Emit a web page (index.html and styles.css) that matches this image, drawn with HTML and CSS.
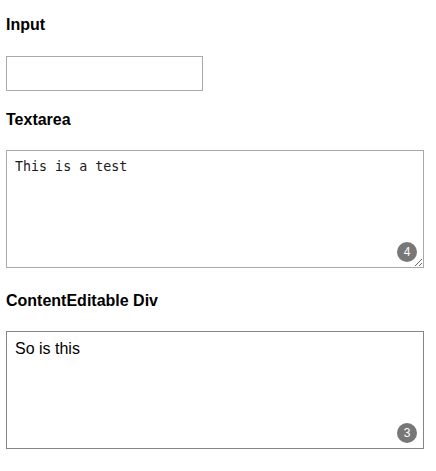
FILE: index.html
```html
<!DOCTYPE html>
<html>
<head>
<meta charset="utf-8">
<link rel="stylesheet" href="styles.css">
</head>
<body>
<main class="page">
  <section class="field field-input">
    <label class="label">Input</label>
    <input class="text-input" type="text">
  </section>
  <section class="field field-textarea">
    <label class="label">Textarea</label>
    <div class="wrap">
      <textarea class="area">This is a test</textarea>
      <span class="badge">4</span>
    </div>
  </section>
  <section class="field field-editable">
    <label class="label">ContentEditable Div</label>
    <div class="wrap">
      <div class="editable" contenteditable="true">So is this</div>
      <span class="badge">3</span>
    </div>
  </section>
</main>
</body>
</html>
```
FILE: styles.css
```css
html, body {
  margin: 0;
  padding: 0;
  background: #fff;
}
.page {
  padding: 16px 0 0 6px;
  font-family: "Liberation Sans", Arial, sans-serif;
  color: #000;
  display: flex;
  flex-direction: column;
}
.field {
  display: flex;
  flex-direction: column;
  align-items: flex-start;
}
.label {
  display: block;
  font-size: 16px;
  font-weight: bold;
  line-height: 18px;
  margin-bottom: 22px;
}
.field-textarea {
  margin-top: 20px;
}
.field-textarea .label, .field-editable .label {
  margin-bottom: 21px;
}
.field-editable {
  margin-top: 24px;
}
.text-input {
  box-sizing: border-box;
  width: 197px;
  height: 35px;
  margin: 0;
  border: 1px solid #a9a9a9;
  padding: 0 8px;
  font: 16px "Liberation Sans", Arial, sans-serif;
  outline: none;
}
.wrap {
  position: relative;
  width: 418px;
  height: 118px;
}
.area {
  box-sizing: border-box;
  display: block;
  width: 418px;
  height: 118px;
  margin: 0;
  border: 1px solid #a9a9a9;
  padding: 8px;
  font-family: "DejaVu Sans Mono", monospace;
  font-size: 13.33px;
  line-height: 15px;
  color: #1a1a1a;
  outline: none;
}
.editable {
  box-sizing: border-box;
  width: 418px;
  height: 118px;
  border: 1px solid #858585;
  padding: 8px;
  font-size: 16px;
  line-height: 18px;
  outline: none;
}
.badge {
  position: absolute;
  right: 7px;
  bottom: 6px;
  width: 20px;
  height: 20px;
  border-radius: 50%;
  background: #777;
  color: #fff;
  font-family: "Liberation Sans", Arial, sans-serif;
  font-size: 12px;
  line-height: 20px;
  text-align: center;
}
```
